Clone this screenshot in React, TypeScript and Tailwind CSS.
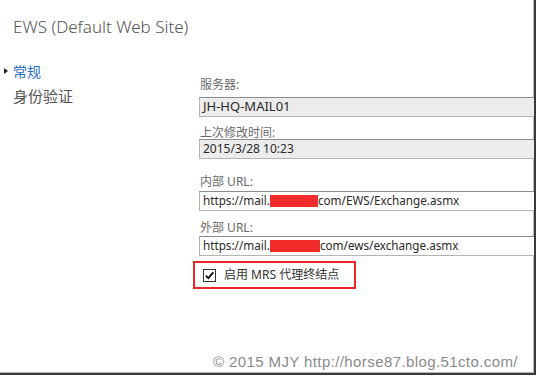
const sans = {
  fontFamily: '"Noto Sans", "Noto Sans CJK SC", sans-serif',
};

function Field({
  label,
  children,
  gray,
  labelClass,
  textClass,
}: {
  label: string;
  children: React.ReactNode;
  gray?: boolean;
  labelClass: string;
  textClass: string;
}) {
  return (
    <>
      <div className={`h-[14px] leading-[14px] text-[12px] text-[#6b6b6b] pl-[1px] ${labelClass}`}>
        {label}
      </div>
      <div
        className={`h-[20px] w-[345px] border border-[#b4b4b4] border-t-[#8c8c8c] flex items-center pl-[3px] text-[#2a2a2a] whitespace-nowrap ${textClass} ${
          gray ? "bg-[#ececec]" : "bg-white"
        }`}
      >
        {children}
      </div>
    </>
  );
}

function Redact({ w }: { w: number }) {
  return (
    <span
      className="inline-block h-[12px] bg-[#f22b2b] align-middle"
      style={{ width: w }}
    />
  );
}

export default function App() {
  return (
    <div className="w-[539px] h-[377px] bg-white overflow-hidden" style={sans}>
      <div className="w-[536px] h-[375px] border-r-2 border-b-2 border-[#3a3a3a] shadow-[inset_-1px_-1px_0_#b8b8b8] flex flex-col overflow-hidden">
        {/* Title */}
        <div className="pl-[13px] pt-[15px] text-[17px] leading-[24px] font-light text-[#555]">
          EWS (Default Web Site)
        </div>

        <div className="flex mt-[18px]">
          {/* Left nav */}
          <div className="w-[199px] shrink-0 flex flex-col pt-[4px]">
            <div className="flex items-center h-[20px] text-[14px] text-[#1f6fbf]">
              <span className="w-0 h-0 ml-[4px] mr-[5px] border-y-[3.5px] border-y-transparent border-l-[4px] border-l-[#222]" />
              常规
            </div>
            <div className="pl-[13px] mt-[5px] h-[20px] leading-[20px] text-[15px] text-[#555]">
              身份验证
            </div>
          </div>

          {/* Form */}
          <div className="flex flex-col pt-[21px]">
            <Field label="服务器:" gray labelClass="mb-[5px]" textClass="text-[13px]">
              JH-HQ-MAIL01
            </Field>
            <Field
              label="上次修改时间:"
              gray
              labelClass="mt-[9px] -mb-[1px]"
              textClass="text-[12px]"
            >
              2015/3/28 10:23
            </Field>
            <Field label="内部 URL:" labelClass="mt-[16px] mb-[2px]" textClass="text-[11.7px]">
              https://mail.
              <Redact w={48} />
              com/EWS/Exchange.asmx
            </Field>
            <Field label="外部 URL:" labelClass="mt-[10px] mb-[1px]" textClass="text-[11.7px]">
              https://mail.
              <Redact w={50} />
              com/ews/exchange.asmx
            </Field>

            <div className="mt-[5px] -ml-[6px] w-[163px] h-[28px] border-2 border-[#e8262a] flex items-center pl-[8px] gap-[8px]">
              <span className="w-[13px] h-[13px] border border-[#333] bg-white flex items-center justify-center">
                <svg width="11" height="11" viewBox="0 0 11 11">
                  <path
                    d="M1.8 5.6 L4.3 8.2 L9.3 2.4"
                    fill="none"
                    stroke="#111"
                    strokeWidth="1.9"
                  />
                </svg>
              </span>
              <span className="text-[12px] text-[#333]">启用 MRS 代理终结点</span>
            </div>
          </div>
        </div>

        {/* Footer */}
        <div
          className="mt-auto mb-[3px] pl-[213px] text-[15px] leading-[16px] tracking-[0.4px] text-[#8a8a8a] whitespace-nowrap"
          style={{ fontFamily: '"Liberation Sans", Arial, sans-serif' }}
        >
          © 2015 MJY http://horse87.blog.51cto.com/
        </div>
      </div>
    </div>
  );
}
